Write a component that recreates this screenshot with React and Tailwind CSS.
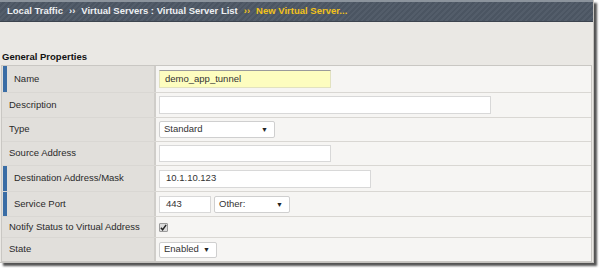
import { useState } from "react";

const rows = [
  { label: "Name", required: true, h: "h-[27px]", field: "name" },
  { label: "Description", h: "h-[25px]", field: "description" },
  { label: "Type", h: "h-[24px]", field: "type" },
  { label: "Source Address", h: "h-[24px]", field: "source" },
  { label: "Destination Address/Mask", required: true, h: "h-[26px]", field: "destination" },
  { label: "Service Port", required: true, h: "h-[25px]", field: "port" },
  { label: "Notify Status to Virtual Address", h: "h-[21px]", field: "notify" },
  { label: "State", h: "h-[23px]", field: "state" },
];

const Arrow = () => <span className="text-[7px] leading-none text-[#222]">▼</span>;

const Select = ({ value, className }) => (
  <div
    className={`flex items-center justify-between rounded-[2px] border border-[#cfcfcf] bg-white pl-[4px] pr-[6px] text-[#333] ${className}`}
  >
    <span>{value}</span>
    <Arrow />
  </div>
);

const TextInput = ({ value, className }) => (
  <div className={`flex items-center border border-[#d8d8d8] bg-white pl-[6px] text-[#333] ${className}`}>
    {value}
  </div>
);

const App = () => {
  const [notify, setNotify] = useState(true);

  const renderField = (field) => {
    switch (field) {
      case "name":
        return (
          <div className="flex h-[18px] w-[172px] items-center border border-[#e2e2c0] border-t-[#9a9a9a] bg-[#fdfdbf] pl-[5px] text-[#333]">
            demo_app_tunnel
          </div>
        );
      case "description":
        return <TextInput value="" className="h-[18px] w-[332px]" />;
      case "type":
        return <Select value="Standard" className="h-[17px] w-[116px]" />;
      case "source":
        return <TextInput value="" className="h-[17px] w-[172px]" />;
      case "destination":
        return <TextInput value="10.1.10.123" className="h-[18px] w-[212px]" />;
      case "port":
        return (
          <div className="flex gap-[3px]">
            <TextInput value="443" className="h-[17px] w-[52px]" />
            <Select value="Other:" className="h-[17px] w-[76px]" />
          </div>
        );
      case "notify":
        return (
          <button
            onClick={() => setNotify(!notify)}
            className="flex h-[9px] w-[9px] items-center justify-center rounded-[1px] border border-[#9a9a9a] bg-[#dcdcdc]"
          >
            {notify && (
              <svg width="7" height="7" viewBox="0 0 8 8">
                <path d="M1 4.3 L3 6.6 L7 1" fill="none" stroke="#222" strokeWidth="1.6" />
              </svg>
            )}
          </button>
        );
      case "state":
        return <Select value="Enabled" className="h-[16px] w-[58px]" />;
      default:
        return null;
    }
  };

  return (
    <div className="h-[268px] w-[599px] bg-white font-['Liberation_Sans',Arial,sans-serif] text-[9.5px]">
      <div className="flex h-[263px] w-[594px] flex-col border-r border-b border-[#c4c2be] bg-[#eae8e4] shadow-[3px_3px_2px_rgba(40,40,40,0.8)]">
        {/* Breadcrumb header */}
        <div className="flex h-[22px] items-center border-t-2 border-b border-t-[#8b939c] border-b-[#3c444e] bg-[repeating-linear-gradient(135deg,#535d6a_0px,#535d6a_2px,#4b5562_2px,#4b5562_4px)] pl-[7px] font-bold text-[#eef0f2]">
          <span>Local Traffic</span>
          <span className="mx-[6px]">››</span>
          <span>Virtual Servers : Virtual Server List</span>
          <span className="mx-[6px] text-[#f2c21a]">››</span>
          <span className="text-[#f2c21a]">New Virtual Server...</span>
        </div>

        <div className="mt-[28px] pl-[2px] font-bold leading-[13px] text-[#111]">General Properties</div>

        {/* Properties table */}
        <div className="ml-[1px] mt-[2px] w-[591px] border border-[#c9c7c3]">
          {rows.map((row, i) => (
            <div key={row.label} className={`flex ${row.h} ${i < rows.length - 1 ? "border-b border-[#d9d7d3]" : ""}`}>
              <div className="flex w-[154px] items-center border-r-2 border-[#cfcdc9] bg-[#e1dfdb] pl-[1px] text-[#2a2a2a]">
                {row.required ? (
                  <>
                    <span className="h-full w-[4px] bg-[#3a6da5]" />
                    <span className="pl-[7px]">{row.label}</span>
                  </>
                ) : (
                  <span className="pl-[6px]">{row.label}</span>
                )}
              </div>
              <div className="flex flex-1 items-center bg-[#f6f5f3] pl-[3px]">{renderField(row.field)}</div>
            </div>
          ))}
        </div>
      </div>
    </div>
  );
};

export default App;
